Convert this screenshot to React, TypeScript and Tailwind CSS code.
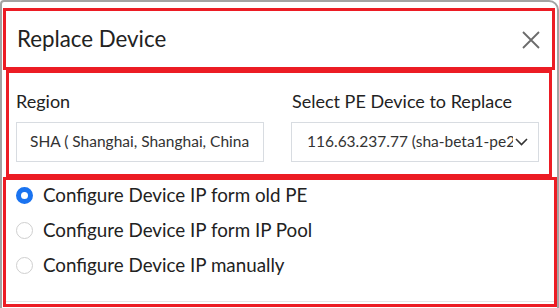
import React from "react";

const RED = "border-[#ec1c24]";

function Radio({ checked, label }: { checked?: boolean; label: string }) {
  return (
    <div className="flex h-[30px] items-center">
      {checked ? (
        <span className="box-border h-[17px] w-[17px] shrink-0 rounded-full border-[5px] border-[#1a73f0] bg-white" />
      ) : (
        <span className="box-border h-[17px] w-[17px] shrink-0 rounded-full border border-[#cfcfcf] bg-white" />
      )}
      <span className="ml-[10px] text-[18.8px] leading-[30px] text-[#222]">{label}</span>
    </div>
  );
}

export default function App() {
  return (
    <div
      className="relative h-[308px] w-[559px] overflow-hidden bg-white"
      style={{ fontFamily: "Lato, 'Open Sans', sans-serif" }}
    >
      <div className="box-border flex h-[330px] w-[559px] flex-col rounded-tl-[4px] rounded-tr-[10px] border-2 border-[#a3a3a3] bg-white">
        {/* Header */}
        <div
          className={`ml-[1px] mr-[2px] mt-[6px] box-border flex h-[62px] items-center justify-between border-[3px] ${RED} pl-[11px] pr-[12px]`}
        >
          <span className="text-[22.3px] leading-none text-[#222]">Replace Device</span>
          <svg width="18" height="18" viewBox="0 0 18 18" className="mt-[1px]">
            <path d="M1 1 L17 17 M17 1 L1 17" stroke="#6b6b6b" strokeWidth="1.8" fill="none" />
          </svg>
        </div>

        {/* Middle */}
        <div className={`ml-[4px] mr-[5px] box-border h-[107px] border-[3px] ${RED} pl-[7px] pt-[17px]`}>
          <div className="grid grid-cols-[248px_248px] gap-x-[27px]">
            <div className="flex flex-col">
              <span className="h-[22px] text-[18px] leading-[22px] text-[#222]">Region</span>
              <div className="mt-[10px] box-border flex h-[40px] items-center overflow-hidden whitespace-nowrap border border-[#d8dce1] pl-[13px] pr-[13px] text-[15.5px] text-[#333]">
                <span className="overflow-hidden">SHA ( Shanghai, Shanghai, China )</span>
              </div>
            </div>
            <div className="flex flex-col">
              <span className="h-[22px] pl-[1px] text-[18px] leading-[22px] text-[#222]">
                Select PE Device to Replace
              </span>
              <div className="mt-[10px] box-border flex h-[40px] items-center border border-[#d8dce1] pl-[15px] pr-[10px] text-[15.5px] text-[#333]">
                <span className="flex-1 overflow-hidden whitespace-nowrap">
                  116.63.237.77 (sha-beta1-pe2)
                </span>
                <svg width="13" height="8" viewBox="0 0 13 8" className="ml-[2px] shrink-0">
                  <path d="M1 1 L6.5 6.5 L12 1" stroke="#333" strokeWidth="1.6" fill="none" />
                </svg>
              </div>
            </div>
          </div>
        </div>

        {/* Bottom */}
        <div className={`ml-[1px] box-border flex h-[130px] flex-col border-[3px] ${RED} pl-[10px]`}>
          <div className="flex flex-col gap-[5px]">
            <Radio checked label="Configure Device IP form old PE" />
            <Radio label="Configure Device IP form IP Pool" />
            <Radio label="Configure Device IP manually" />
          </div>
          <div className="mb-[2px] -ml-[10px] mt-auto h-px bg-[#e6e6e6]" />
        </div>
      </div>
    </div>
  );
}
